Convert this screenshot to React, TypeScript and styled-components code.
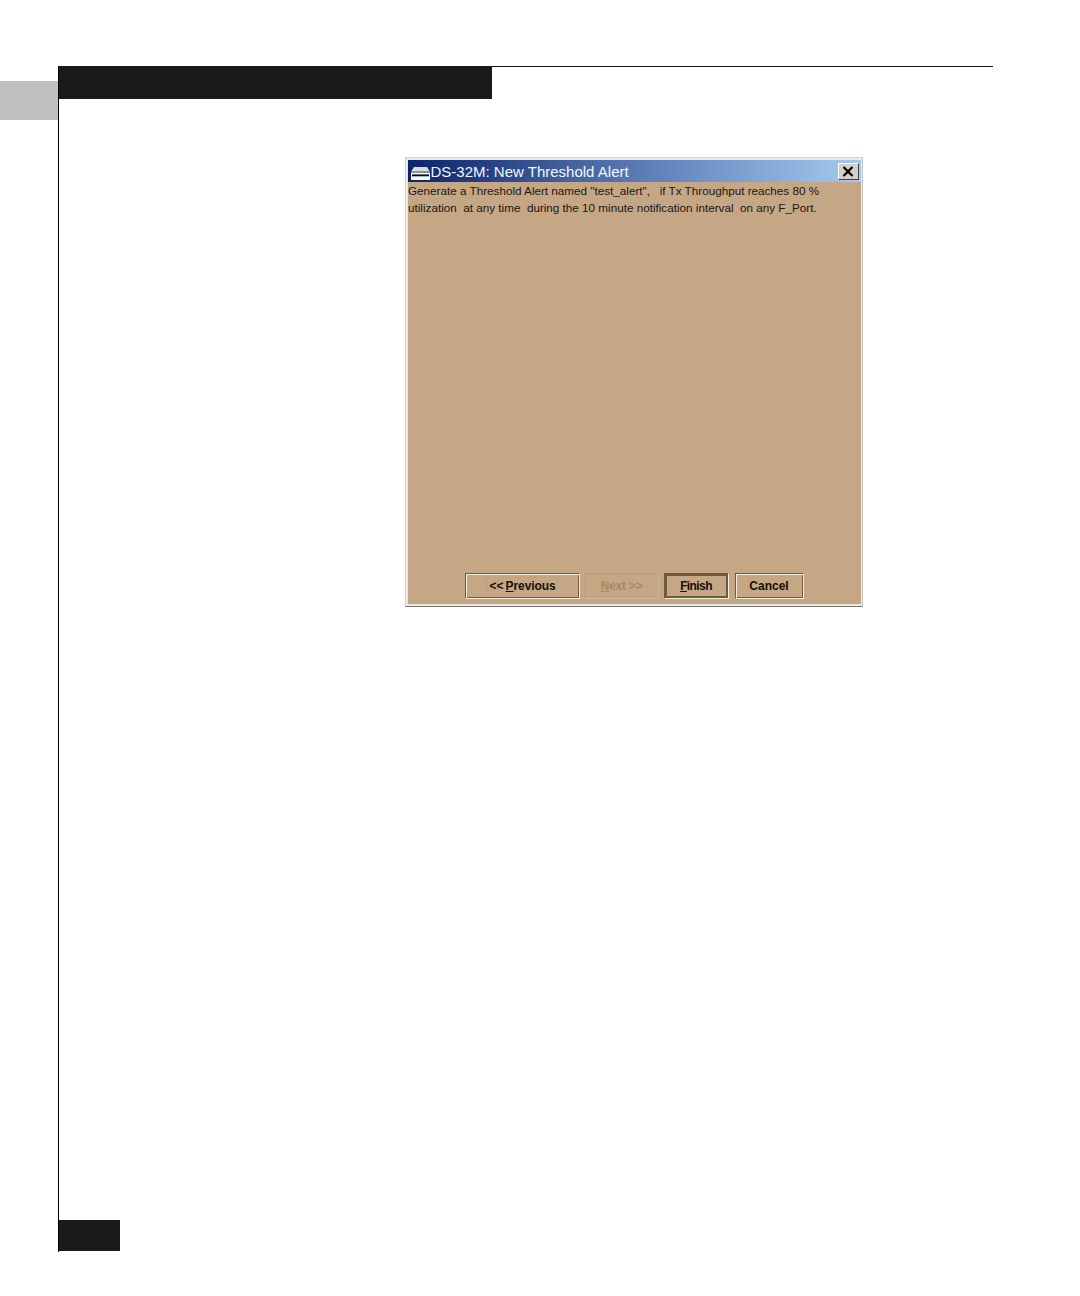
import React from "react";
import styled, { createGlobalStyle } from "styled-components";

const Global = createGlobalStyle`
  html, body { margin: 0; padding: 0; background: #fff; }
  body { font-family: "Liberation Sans", Arial, sans-serif; }
`;

const Page = styled.div`
  width: 1080px;
  height: 1296px;
  display: grid;
  grid-template-columns: 58px 1fr;
  padding-top: 66px;
  box-sizing: border-box;
  background: #fff;
`;

const SideTab = styled.div`
  height: 39px;
  margin-top: 15px;
  background: #c0c0c0;
`;

const Frame = styled.div`
  height: 1186px;
  border-left: 1.5px solid #000;
  box-sizing: border-box;
  display: flex;
  flex-direction: column;
`;

const Header = styled.div`
  display: flex;
  align-items: flex-start;
`;

const HeaderBar = styled.div`
  width: 432.5px;
  height: 33px;
  background: #1a1a1a;
`;

const HeaderRule = styled.div`
  width: 501.5px;
  height: 1px;
  background: #111;
`;

const Dialog = styled.div`
  width: 458px;
  height: 450px;
  margin: 58px 0 0 345.5px;
  box-sizing: border-box;
  padding: 2px 1px 2px 2px;
  background: #ece9e4;
  border: 1px solid #d4d4d4;
  border-right-color: #c4c4c4;
  border-bottom-color: #77736e;
  display: flex;
  flex-direction: column;
`;

const TitleBar = styled.div`
  height: 22px;
  flex: none;
  display: flex;
  align-items: center;
  padding: 0 2px 0 3px;
  gap: 1px;
  background: linear-gradient(90deg, #0a246a 0%, #5c7db8 52%, #a6caf0 100%);
`;

const TitleIcon = styled.svg`
  flex: none;
  margin-top: 5px;
`;

const TitleText = styled.span`
  flex: 1;
  padding-top: 2px;
  font-size: 15px;
  line-height: 22px;
  color: #f4f6fa;
  white-space: pre;
`;

const CloseButton = styled.div`
  width: 21px;
  height: 17px;
  box-sizing: border-box;
  background: #d4d0c8;
  border: 1px solid;
  border-color: #fff #404040 #404040 #fff;
  display: flex;
  align-items: center;
  justify-content: center;
`;

const Body = styled.div`
  flex: 1;
  display: flex;
  flex-direction: column;
  background: #c5a685;
  padding: 0 0 5px 0;
  min-height: 0;
`;

const Message = styled.div`
  flex: 1;
  padding-left: 0.5px;
  font-size: 11.7px;
  line-height: 17px;
  color: #1b1710;
  white-space: pre;
`;

const ButtonRow = styled.div`
  display: flex;
  padding-left: 57px;
`;

const Button = styled.div<{
  $w: number;
  $gap?: number;
  $tight?: number;
  $disabled?: boolean;
  $default?: boolean;
}>`
  width: ${(p) => p.$w}px;
  margin-left: ${(p) => p.$gap ?? 0}px;
  letter-spacing: ${(p) => p.$tight ?? 0}px;
  height: 26px;
  box-sizing: border-box;
  display: flex;
  align-items: center;
  justify-content: center;
  font-size: 12px;
  font-weight: bold;
  white-space: pre;
  color: ${(p) => (p.$disabled ? "#a98a63" : "#14100a")};
  border: 1px solid ${(p) => (p.$disabled ? "#b89a76" : "#6e5a3c")};
  border-right-color: ${(p) => (p.$disabled ? "#d0b696" : "#f5efe0")};
  border-bottom-color: ${(p) => (p.$disabled ? "#d0b696" : "#f5efe0")};
  box-shadow: ${(p) =>
    p.$disabled
      ? "none"
      : p.$default
      ? "inset 2px 2px 0 #6e5a3c, inset -2px -2px 0 #6e5a3c"
      : "inset 1px 1px 0 #f5efe0, inset -1px -1px 0 #6e5a3c"};
`;

const Focus = styled.span`
  box-sizing: border-box;
  height: 18px;
  margin-left: 1px;
  padding: 0 1px;
  border: 1px solid #cc9c84;
  line-height: 16px;
`;

const Mnemonic = styled.span`
  text-decoration: underline;
`;

const Folio = styled.div`
  margin-top: auto;
  width: 61px;
  height: 31px;
  margin-bottom: 1px;
  background: #1a1a1a;
`;

const DeviceIcon = () => (
  <TitleIcon
    width="19"
    height="13"
    viewBox="0 0 19 14"
    preserveAspectRatio="none"
    aria-hidden="true"
  >
    <path d="M3 0h13l3 5H0z" fill="#dcdcdc" />
    <rect x="0" y="5" width="19" height="1" fill="#555b6b" />
    <rect x="0" y="6" width="19" height="8" fill="#f6f6f6" />
    <rect x="1" y="8" width="17" height="2" fill="#0c0c0c" />
  </TitleIcon>
);

const CloseIcon = () => (
  <svg width="12" height="11" viewBox="0 0 12 11" aria-hidden="true">
    <path d="M1.5 1l9 9M10.5 1l-9 9" stroke="#000" strokeWidth="2.2" fill="none" />
  </svg>
);

export default function App() {
  return (
    <>
      <Global />
      <Page>
        <SideTab />
        <Frame>
          <Header>
            <HeaderBar />
            <HeaderRule />
          </Header>
          <Dialog>
            <TitleBar>
              <DeviceIcon />
              <TitleText>DS-32M: New Threshold Alert</TitleText>
              <CloseButton>
                <CloseIcon />
              </CloseButton>
            </TitleBar>
            <Body>
              <Message>
                {'Generate a Threshold Alert named "test_alert",   if Tx Throughput reaches 80 %\nutilization  at any time  during the 10 minute notification interval  on any F_Port.'}
              </Message>
              <ButtonRow>
                <Button $w={115} $tight={-0.1}>
                  <Focus>
                    {"<<\u2009"}
                    <Mnemonic>P</Mnemonic>revious
                  </Focus>
                </Button>
                <Button $w={74} $gap={5} $tight={-0.3} $disabled>
                  <span>
                    <Mnemonic>N</Mnemonic>ext {">>"}
                  </span>
                </Button>
                <Button $w={65} $gap={5} $tight={-0.6} $default>
                  <span>
                    <Mnemonic>F</Mnemonic>inish
                  </span>
                </Button>
                <Button $w={69} $gap={6}>Cancel</Button>
              </ButtonRow>
            </Body>
          </Dialog>
          <Folio />
        </Frame>
      </Page>
    </>
  );
}
